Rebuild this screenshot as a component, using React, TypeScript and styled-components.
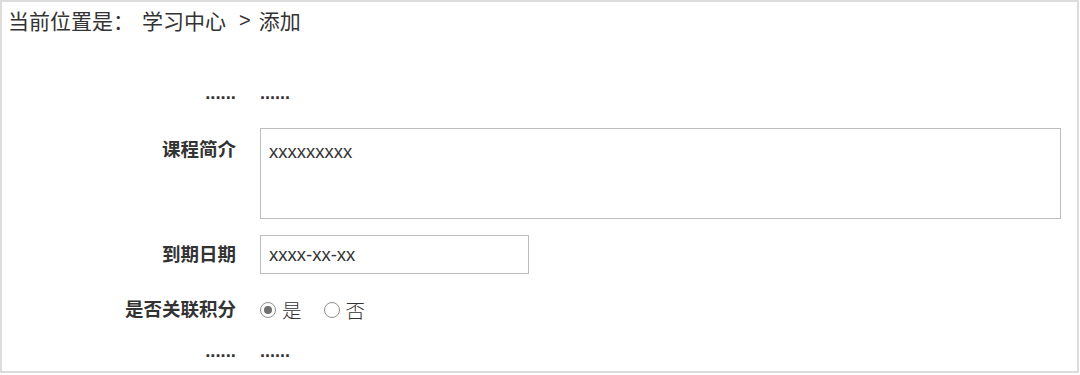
import React from "react";
import styled, { createGlobalStyle } from "styled-components";

const Global = createGlobalStyle`
  html, body { margin: 0; padding: 0; background: #fff; }
  body { font-family: "Liberation Sans", "Noto Sans CJK SC", sans-serif; color: #333; }
  * { box-sizing: border-box; }
`;

const Frame = styled.div`
  width: 1079px;
  height: 373px;
  border: 2px solid #dcdcdc;
  display: flex;
  flex-direction: column;
`;

const Breadcrumb = styled.div`
  display: flex;
  align-items: center;
  padding: 3px 0 0 6px;
  font-size: 21px;
  line-height: 30px;
  color: #333;
  font-family: "Noto Sans CJK SC", sans-serif;
`;

const Crumb = styled.span<{ $ml?: number }>`
  margin-left: ${(p) => p.$ml ?? 0}px;
`;

const Sep = styled.span`
  font-family: "Liberation Sans", sans-serif;
  font-size: 20px;
  margin: 0 8px 0 13px;
`;

const Form = styled.div`
  display: flex;
  flex-direction: column;
`;

const Row = styled.div<{ $mt: number; $h: number; $top?: boolean }>`
  display: grid;
  grid-template-columns: 234px 1fr;
  column-gap: 24px;
  margin-top: ${(p) => p.$mt}px;
  min-height: ${(p) => p.$h}px;
  align-items: ${(p) => (p.$top ? "start" : "center")};
`;

const Label = styled.div<{ $pt?: number }>`
  text-align: right;
  font-weight: bold;
  font-size: 18.5px;
  line-height: 24px;
  color: #333;
  padding-top: ${(p) => p.$pt ?? 0}px;
`;

const Dots = styled.div`
  font-size: 18px;
  line-height: 24px;
  font-weight: bold;
  color: #333;
`;

const TextArea = styled.textarea`
  width: 801px;
  height: 91px;
  border: 1px solid #bdbdbd;
  padding: 11px 8px;
  font-family: "Liberation Sans", "Noto Sans CJK SC", sans-serif;
  font-size: 18.5px;
  line-height: 24px;
  color: #333;
  resize: none;
  outline: none;
  display: block;
  margin: 0;
`;

const Input = styled.input`
  width: 269px;
  height: 39px;
  border: 1px solid #bdbdbd;
  padding: 0 8px;
  font-family: "Liberation Sans", "Noto Sans CJK SC", sans-serif;
  font-size: 18.5px;
  color: #333;
  outline: none;
  display: block;
  margin: 0;
`;

const RadioGroup = styled.div`
  display: flex;
  align-items: center;
`;

const RadioOption = styled.label<{ $ml?: number }>`
  display: flex;
  align-items: center;
  margin-left: ${(p) => p.$ml ?? 0}px;
  font-size: 19.5px;
  line-height: 24px;
  color: #333;
  font-family: "Noto Sans CJK SC", sans-serif;
  font-weight: 300;
`;

const RadioCircle = styled.span<{ $checked?: boolean }>`
  flex: 0 0 16px;
  width: 16px;
  height: 16px;
  border-radius: 50%;
  border: 1px solid #8f8f8f;
  margin-right: 6px;
  display: flex;
  align-items: center;
  justify-content: center;
  &::after {
    content: "";
    width: 8px;
    height: 8px;
    border-radius: 50%;
    background: ${(p) => (p.$checked ? "#6f6f6f" : "transparent")};
  }
`;

export default function App() {
  return (
    <>
      <Global />
      <Frame>
        <Breadcrumb>
          <Crumb>当前位置是：</Crumb>
          <Crumb $ml={8}>学习中心</Crumb>
          <Sep>&gt;</Sep>
          <Crumb>添加</Crumb>
        </Breadcrumb>
        <Form>
          <Row $mt={43} $h={30}>
            <Label>......</Label>
            <Dots>......</Dots>
          </Row>
          <Row $mt={20} $h={91} $top>
            <Label $pt={10}>课程简介</Label>
            <TextArea readOnly defaultValue="xxxxxxxxx" />
          </Row>
          <Row $mt={16} $h={39}>
            <Label>到期日期</Label>
            <Input readOnly defaultValue="xxxx-xx-xx" />
          </Row>
          <Row $mt={21} $h={30}>
            <Label>是否关联积分</Label>
            <RadioGroup>
              <RadioOption>
                <RadioCircle $checked />是
              </RadioOption>
              <RadioOption $ml={22}>
                <RadioCircle />否
              </RadioOption>
            </RadioGroup>
          </Row>
          <Row $mt={11} $h={30}>
            <Label>......</Label>
            <Dots>......</Dots>
          </Row>
        </Form>
      </Frame>
    </>
  );
}
